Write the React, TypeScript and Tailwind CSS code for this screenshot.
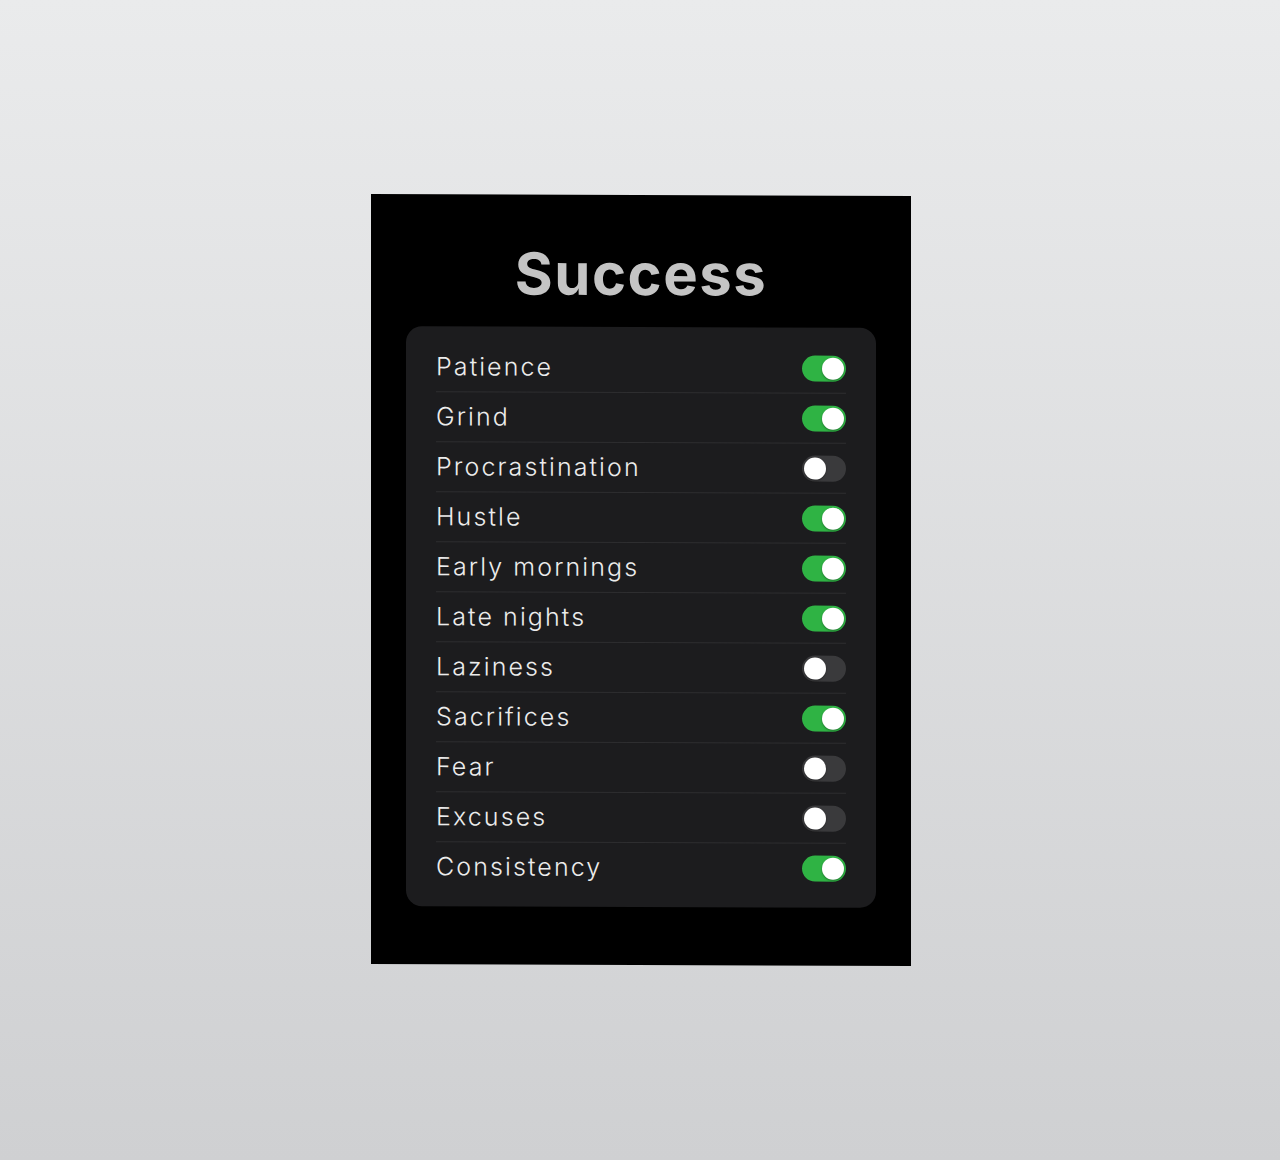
import React, { useState } from 'react';

const initial = [
  { label: 'Patience', on: true },
  { label: 'Grind', on: true },
  { label: 'Procrastination', on: false },
  { label: 'Hustle', on: true },
  { label: 'Early mornings', on: true },
  { label: 'Late nights', on: true },
  { label: 'Laziness', on: false },
  { label: 'Sacrifices', on: true },
  { label: 'Fear', on: false },
  { label: 'Excuses', on: false },
  { label: 'Consistency', on: true },
];

function Toggle({ on, onClick }: { on: boolean; onClick: () => void }) {
  return (
    <button
      onClick={onClick}
      className={`flex h-[26px] w-[44px] shrink-0 items-center rounded-full p-[2px] ${
        on ? 'justify-end bg-[#2fb344]' : 'justify-start bg-[#3a3a3c]'
      }`}
    >
      <span className="block h-[22px] w-[22px] rounded-full bg-white shadow-[0_1px_2px_rgba(0,0,0,0.35)]" />
    </button>
  );
}

export default function App() {
  const [items, setItems] = useState(initial);

  const flip = (i: number) =>
    setItems((prev) => prev.map((it, idx) => (idx === i ? { ...it, on: !it.on } : it)));

  return (
    <div
      className="flex min-h-[1160px] w-full justify-center bg-gradient-to-b from-[#eaebec] to-[#cfd0d2] pl-[2px] pt-[195px]"
      style={{ fontFamily: 'Inter, "Noto Sans", sans-serif' }}
    >
      <div className="h-[770px] w-[540px] skew-y-[0.2deg] bg-black px-[35px] pt-[41px]">
        <h1 className="text-center text-[58px] font-bold leading-[76px] tracking-[1.5px] text-[#c4c4c4]">
          Success
        </h1>
        <div className="mt-[15px] rounded-[16px] bg-[#1c1c1e] px-[30px] pt-[16px] pb-[14px]">
          {items.map((it, i) => (
            <div
              key={it.label}
              className={`flex h-[50px] items-center justify-between ${
                i < items.length - 1 ? 'border-b border-[#2e2e30]' : ''
              }`}
            >
              <span className="text-[25px] font-light tracking-[2.1px] text-[#ececec]">{it.label}</span>
              <Toggle on={it.on} onClick={() => flip(i)} />
            </div>
          ))}
        </div>
      </div>
    </div>
  );
}
